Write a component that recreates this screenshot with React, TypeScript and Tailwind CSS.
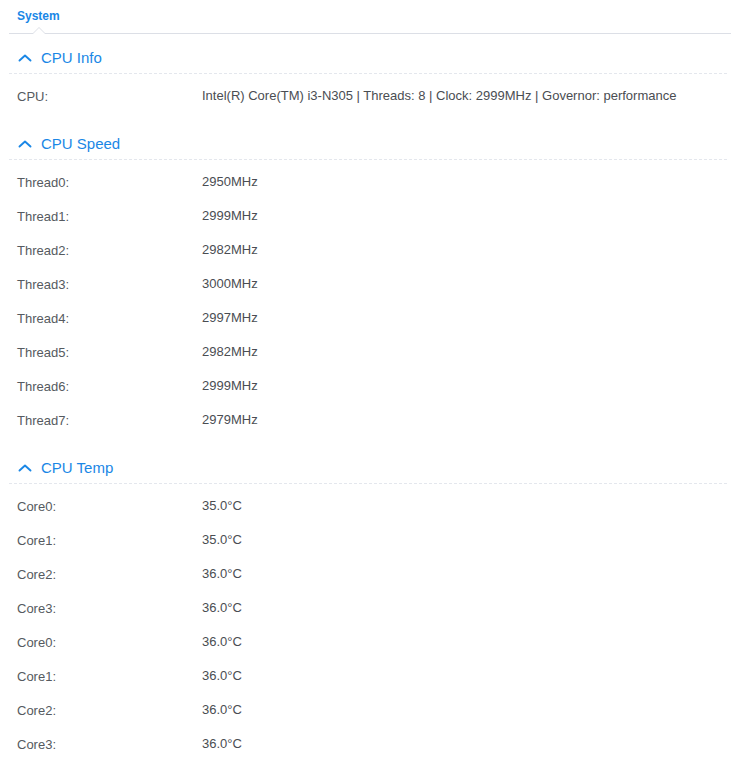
import { FC } from 'react';

interface Row {
  label: string;
  value: string;
}

interface Section {
  title: string;
  rows: Row[];
}

const sections: Section[] = [
  {
    title: 'CPU Info',
    rows: [{ label: 'CPU:', value: 'Intel(R) Core(TM) i3-N305 | Threads: 8 | Clock: 2999MHz | Governor: performance' }],
  },
  {
    title: 'CPU Speed',
    rows: [
      { label: 'Thread0:', value: '2950MHz' },
      { label: 'Thread1:', value: '2999MHz' },
      { label: 'Thread2:', value: '2982MHz' },
      { label: 'Thread3:', value: '3000MHz' },
      { label: 'Thread4:', value: '2997MHz' },
      { label: 'Thread5:', value: '2982MHz' },
      { label: 'Thread6:', value: '2999MHz' },
      { label: 'Thread7:', value: '2979MHz' },
    ],
  },
  {
    title: 'CPU Temp',
    rows: [
      { label: 'Core0:', value: '35.0°C' },
      { label: 'Core1:', value: '35.0°C' },
      { label: 'Core2:', value: '36.0°C' },
      { label: 'Core3:', value: '36.0°C' },
      { label: 'Core0:', value: '36.0°C' },
      { label: 'Core1:', value: '36.0°C' },
      { label: 'Core2:', value: '36.0°C' },
      { label: 'Core3:', value: '36.0°C' },
    ],
  },
];

const Chevron: FC = () => (
  <svg width="14" height="14" viewBox="0 0 14 14" className="shrink-0">
    <polyline points="1.5,9.5 7,4.5 12.5,9.5" fill="none" stroke="#1a87e6" strokeWidth="1.9" strokeLinecap="round" strokeLinejoin="round" />
  </svg>
);

const SectionBlock: FC<{ section: Section }> = ({ section }) => (
  <div className="mb-[14px]">
    <div className="h-[31px] flex items-center gap-[9px] pl-[9px] border-b border-dashed border-[#e4e7ed] mr-[4px]">
      <Chevron />
      <span className="text-[15px] text-[#1a87e6]">{section.title}</span>
    </div>
    <div className="pt-[7px]">
      {section.rows.map((r, i) => (
        <div key={i} className="h-[34px] flex text-[13px] leading-[20px]">
          <div className="w-[193px] pl-[8px] pt-[6px] text-[#555a60]">{r.label}</div>
          <div className="pt-[5px] text-[#4a4d52]">{r.value}</div>
        </div>
      ))}
    </div>
  </div>
);

const App: FC = () => {
  return (
    <div className="w-[731px] bg-white pl-[9px]" style={{ fontFamily: '"Liberation Sans", Arial, sans-serif' }}>
      <div className="relative h-[34px] border-b border-[#dcdfe6]">
        <span className="absolute left-[8px] top-[7px] text-[12px] font-bold text-[#1a87e6]">System</span>
        <div className="absolute left-[23px] bottom-[-1px] w-0 h-0 border-l-[7px] border-r-[7px] border-b-[7px] border-l-transparent border-r-transparent border-b-[#dcdfe6]" />
        <div className="absolute left-[24px] bottom-[-1px] w-0 h-0 border-l-[6px] border-r-[6px] border-b-[6px] border-l-transparent border-r-transparent border-b-white" />
      </div>
      <div className="pt-[9px]">
        {sections.map((s) => (
          <SectionBlock key={s.title} section={s} />
        ))}
      </div>
    </div>
  );
};

export default App;
